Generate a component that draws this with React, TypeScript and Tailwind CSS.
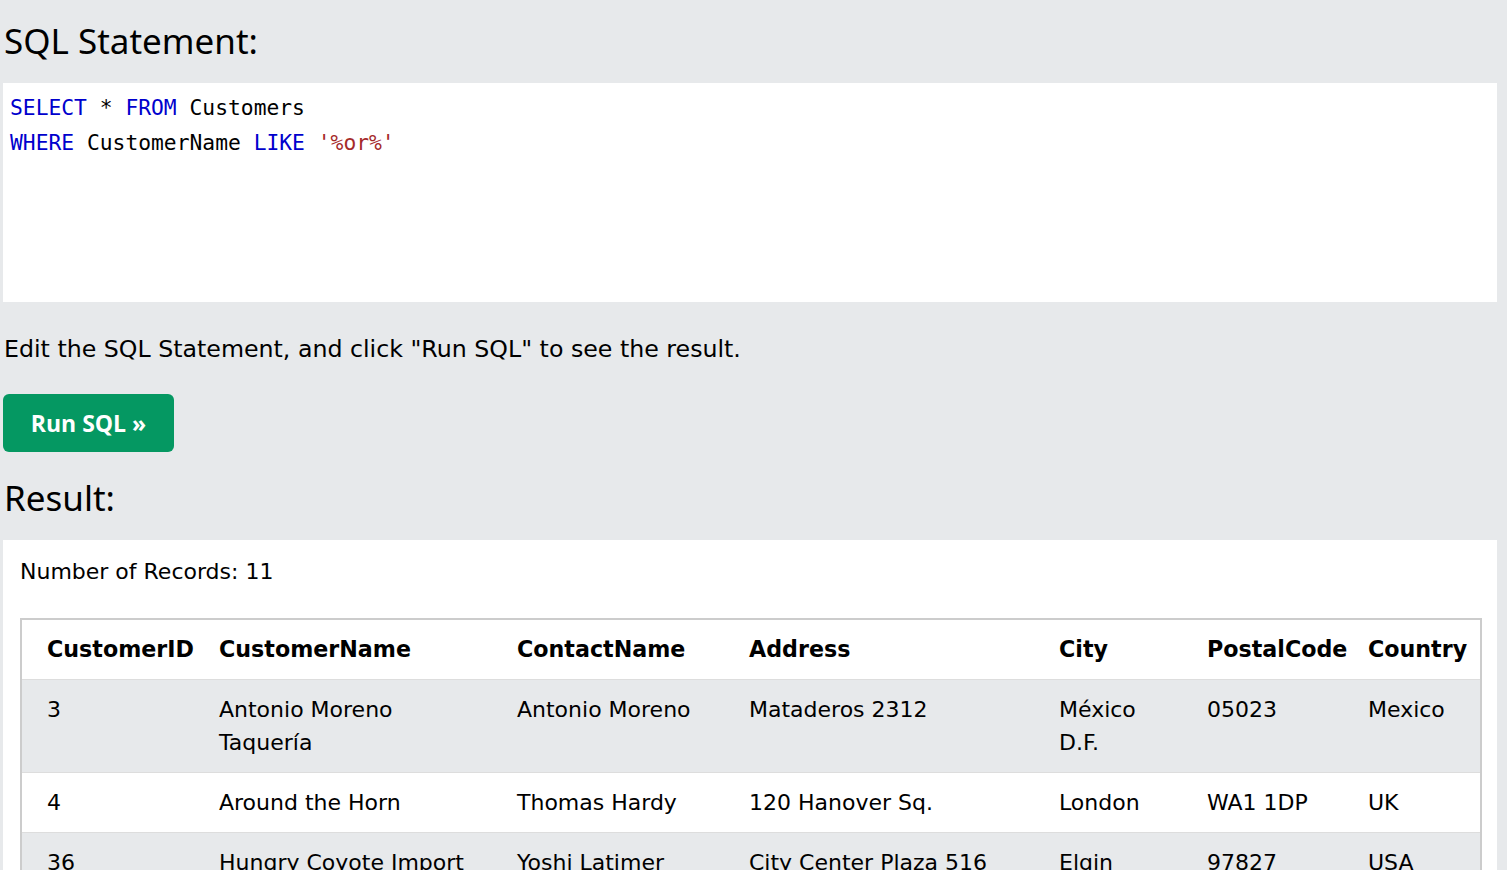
import React from "react";

const rows = [
  ["3", "Antonio Moreno Taquería", "Antonio Moreno", "Mataderos 2312", "México D.F.", "05023", "Mexico"],
  ["4", "Around the Horn", "Thomas Hardy", "120 Hanover Sq.", "London", "WA1 1DP", "UK"],
  ["36", "Hungry Coyote Import Store", "Yoshi Latimer", "City Center Plaza 516 Main St.", "Elgin", "97827", "USA"],
];

const headers = ["CustomerID", "CustomerName", "ContactName", "Address", "City", "PostalCode", "Country"];
const widths = ["w-[186px]", "w-[298px]", "w-[232px]", "w-[310px]", "w-[148px]", "w-[161px]", "w-[125px]"];

export default function App() {
  return (
    <div className="min-h-screen bg-[#e7e9eb] pl-[3px] pr-[10px] text-black">
      <h2 className="pt-[14px] pb-[15px] pl-[1px] text-[35px] leading-[54px] [font-family:'Noto_Sans','Open_Sans',sans-serif]">
        SQL Statement:
      </h2>
      <div className="h-[219px] bg-white px-[7px] pt-[7px] text-[21.3px] leading-[35px] [font-family:'DejaVu_Sans_Mono',monospace]">
        <div>
          <span className="text-[#0000cd]">SELECT</span> * <span className="text-[#0000cd]">FROM</span> Customers
        </div>
        <div>
          <span className="text-[#0000cd]">WHERE</span> CustomerName <span className="text-[#0000cd]">LIKE</span>{" "}
          <span className="text-[#a52a2a]">'%or%'</span>
        </div>
      </div>
      <p className="mt-[30px] pl-[1px] text-[23.7px] leading-[34px] [font-family:'DejaVu_Sans',Verdana,sans-serif]">
        Edit the SQL Statement, and click "Run SQL" to see the result.
      </p>
      <button className="mt-[28px] flex h-[58px] w-[171px] items-center justify-center rounded-[6px] bg-[#059862] text-[23px] font-bold text-white [font-family:'Open_Sans',sans-serif]">
        Run SQL »
      </button>
      <h2 className="pt-[17px] pb-[14px] pl-[1px] text-[35px] leading-[57px] [font-family:'Noto_Sans','Open_Sans',sans-serif]">
        Result:
      </h2>
      <div className="bg-white px-[17px] pt-[17px] pb-[20px] [font-family:'DejaVu_Sans',Verdana,sans-serif] text-[22px]">
        <div className="leading-[30px]">Number of Records: 11</div>
        <table className="mt-[31px] w-[1460px] table-fixed border-collapse border-2 border-[#ccc]">
          <colgroup>
            {widths.map((w, i) => (
              <col key={i} className={w} />
            ))}
          </colgroup>
          <thead>
            <tr className="border-b border-[#ddd] bg-white">
              {headers.map((h, i) => (
                <th
                  key={h}
                  className={`${i === 0 ? "pl-[25px]" : "pl-[12px]"} pr-[4px] py-[13px] text-left text-[22.2px] font-bold leading-[33px] align-top whitespace-nowrap`}
                >
                  {h}
                </th>
              ))}
            </tr>
          </thead>
          <tbody>
            {rows.map((r, ri) => (
              <tr key={ri} className={`border-b border-[#ddd] ${ri % 2 === 0 ? "bg-[#e7e9eb]" : "bg-white"}`}>
                {r.map((c, i) => (
                  <td
                    key={i}
                    className={`${i === 0 ? "pl-[25px]" : "pl-[12px]"} pr-[24px] py-[13px] leading-[33px] align-top`}
                  >
                    {c}
                  </td>
                ))}
              </tr>
            ))}
          </tbody>
        </table>
      </div>
    </div>
  );
}
